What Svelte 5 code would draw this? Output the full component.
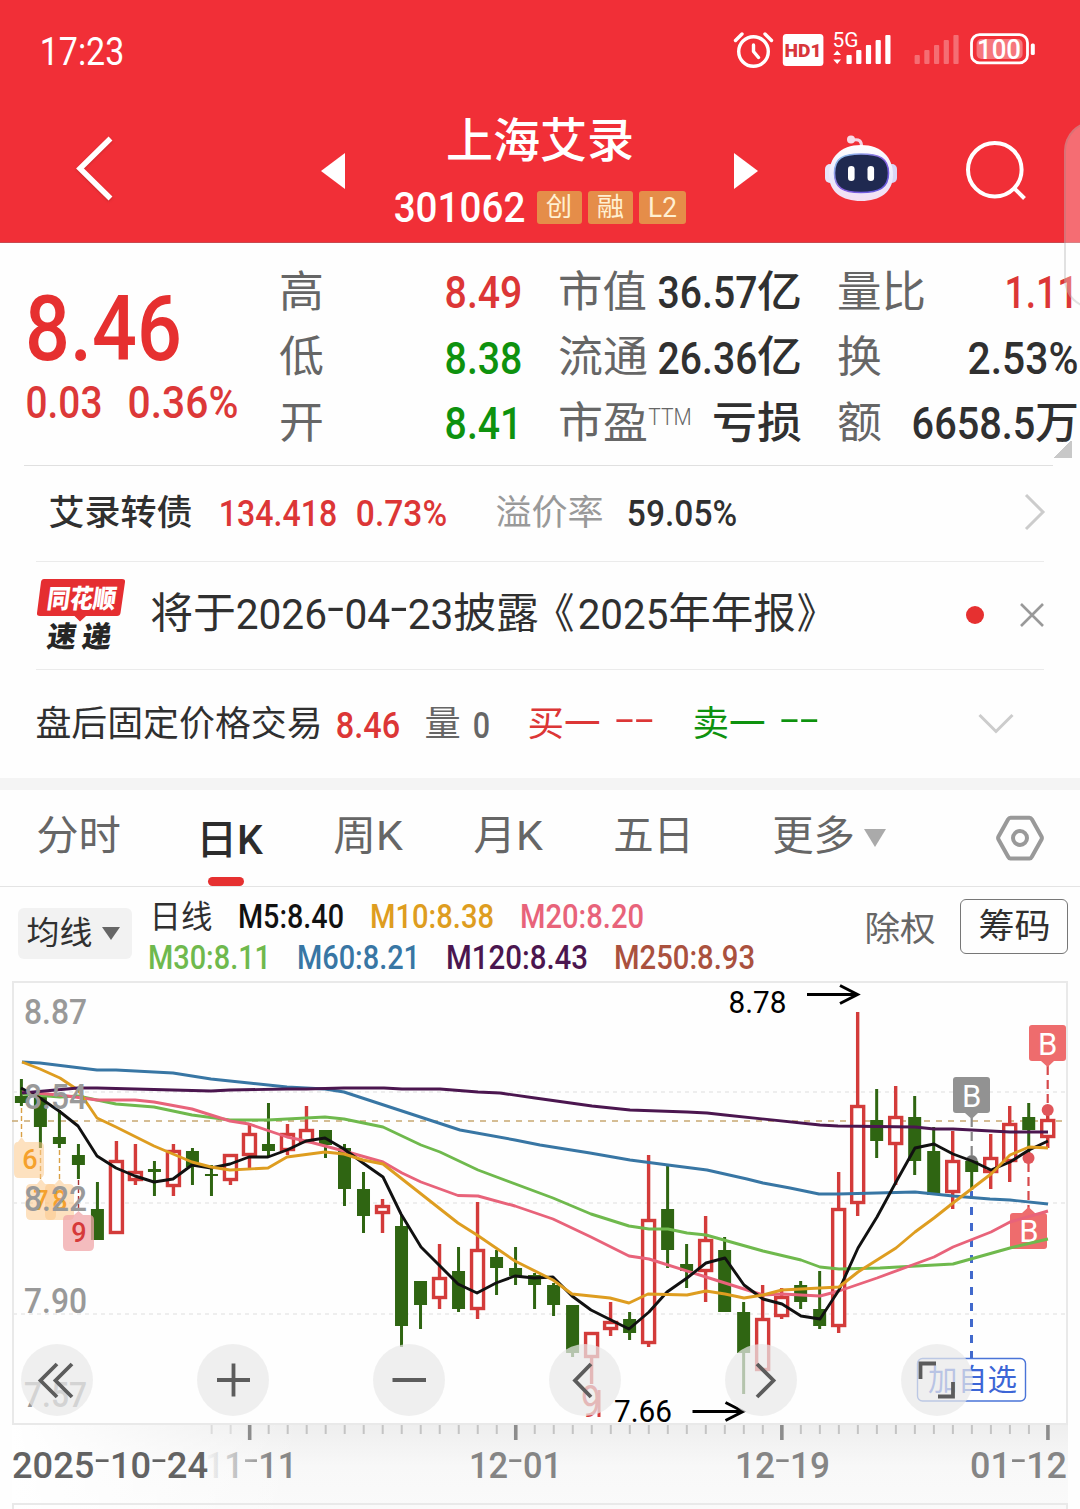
<script>
  const quoteCols = [
    [
      { label: '高', lw: 41, value: '8.49', vw: 75, tone: 'up' },
      { label: '低', lw: 41, value: '8.38', vw: 75, tone: 'down' },
      { label: '开', lw: 41, value: '8.41', vw: 75, tone: 'down' }
    ],
    [
      { label: '市值', lw: 85, value: '36.57', vw: 97, unit: '亿', uw: 41 },
      { label: '流通', lw: 86, value: '26.36', vw: 97, unit: '亿', uw: 41 },
      { label: '市盈', lw: 86, sup: 'TTM', unit: '亏损', uw: 86 }
    ],
    [
      { label: '量比', lw: 85, value: '1.11', vw: 71, tone: 'up' },
      { label: '换', lw: 41, value: '2.53%', vw: 108 },
      { label: '额', lw: 41, value: '6658.5', vw: 121, unit: '万', uw: 40 }
    ]
  ];

  const tabs = [
    { text: '分时', w: 81, x: 38 },
    { text: '日K', w: 63, x: 198, active: true },
    { text: '周K', w: 66, x: 335 },
    { text: '月K', w: 66, x: 475 },
    { text: '五日', w: 77, x: 615 },
    { text: '更多', w: 79, x: 774 }
  ].map((t, i, all) => ({ ...t, lead: i ? t.x - all[i - 1].x - all[i - 1].w : t.x }));

  // direction, high, body top, body bottom, low
  const candles = [
    ['g', 1079, 1096, 1103, 1106], ['g', 1096, 1097, 1127, 1148], ['g', 1110, 1137, 1144, 1148],
    ['g', 1144, 1155, 1165, 1179], ['g', 1182, 1209, 1240, 1240], ['r', 1141, 1160, 1234, 1234],
    ['r', 1144, 1171, 1181, 1185], ['g', 1161, 1169, 1172, 1196], ['r', 1144, 1150, 1187, 1196],
    ['g', 1148, 1151, 1167, 1185], ['g', 1165, 1174, 1176, 1196], ['r', 1154, 1154, 1181, 1185],
    ['r', 1123, 1133, 1156, 1168], ['g', 1103, 1144, 1151, 1157], ['r', 1124, 1133, 1151, 1155],
    ['r', 1106, 1129, 1143, 1143], ['g', 1130, 1130, 1145, 1158], ['g', 1144, 1148, 1189, 1206],
    ['g', 1172, 1189, 1216, 1233], ['r', 1199, 1205, 1214, 1233], ['g', 1215, 1226, 1326, 1347],
    ['g', 1281, 1281, 1305, 1329], ['r', 1244, 1277, 1299, 1309], ['g', 1247, 1271, 1309, 1312],
    ['r', 1202, 1249, 1310, 1319], ['g', 1250, 1257, 1268, 1295], ['g', 1247, 1268, 1276, 1285],
    ['g', 1273, 1275, 1285, 1309], ['g', 1283, 1285, 1305, 1316], ['g', 1305, 1305, 1353, 1357],
    ['r', 1332, 1332, 1358, 1384], ['r', 1302, 1321, 1330, 1336], ['g', 1312, 1319, 1333, 1340],
    ['r', 1155, 1219, 1344, 1347], ['g', 1165, 1209, 1250, 1268], ['g', 1244, 1264, 1271, 1288],
    ['r', 1216, 1239, 1272, 1302], ['g', 1237, 1250, 1312, 1312], ['g', 1302, 1312, 1353, 1394],
    ['r', 1285, 1318, 1371, 1371], ['r', 1288, 1296, 1317, 1319], ['g', 1281, 1285, 1302, 1309],
    ['g', 1271, 1309, 1326, 1329], ['r', 1172, 1208, 1327, 1333], ['r', 1012, 1105, 1204, 1216],
    ['g', 1089, 1120, 1141, 1158], ['r', 1086, 1116, 1145, 1185], ['g', 1096, 1117, 1161, 1175],
    ['g', 1127, 1151, 1195, 1195], ['r', 1131, 1160, 1193, 1209], ['g', 1161, 1161, 1172, 1190],
    ['r', 1134, 1157, 1173, 1189], ['r', 1106, 1123, 1162, 1182], ['g', 1103, 1117, 1130, 1157],
    ['r', 1110, 1119, 1138, 1148]
  ].map(([dir, high, top, bottom, low], i) => ({ dir, high, top, bottom, low, x: 21.4 + i * 19.006 }));

  const averages = [
    { color: '#6fb94d', pts: '22,1094 60,1097 78,1096 116,1104 154,1107 192,1115 230,1120 268,1120 325,1117 344,1119 383,1127 421,1145 440,1152 478,1170 553,1198 591,1214 629,1226 649,1229 668,1229 687,1233 706,1235 763,1251 801,1260 820,1267 839,1269 880,1268 953,1264 1010,1248 1048,1239' },
    { color: '#e8637a', pts: '22,1092 60,1095 97,1100 135,1100 154,1102 192,1109 230,1121 249,1124 287,1137 306,1141 344,1151 383,1162 402,1173 421,1182 458,1195.5 478,1196 515,1206 553,1219 591,1237 629,1256 649,1259 706,1277 763,1295 782,1294 820,1296 839,1291 877,1278 915,1264 934,1257 953,1247 991,1232 1010,1222 1048,1211' },
    { color: '#3876a4', pts: '22,1062 40,1063 97,1070 116,1070 173,1073 211,1079 249,1083 287,1087 325,1089 344,1092 402,1111 460,1130 515,1140 540,1145 590,1153 630,1160 668,1165 707,1170 747,1179 763,1183 790,1188 819,1194 838,1194 915,1192 953,1196 990,1199 1010,1200 1048,1204' },
    { color: '#111', pts: '21,1088 40,1098 59,1111 78,1126 97,1156 116,1168 135,1176 154,1182 173,1179 192,1165 211,1168 230,1164 249,1157 268,1157 287,1150 306,1141 325,1138 344,1149 363,1163 383,1177 401,1214 421,1247 458,1284 477,1293 496,1283 515,1276 534,1278 553,1277 572,1296 591,1310 629,1329 649,1312 667,1292 687,1278 706,1263 725,1258 744,1285 763,1299 782,1304 801,1316 820,1319 839,1290 858,1248 877,1217 896,1182 915,1148 934,1144 953,1154 972,1161 991,1170 1010,1162 1029,1150 1048,1141' },
    { color: '#de9d20', pts: '22,1062 40,1069 60,1078 78,1090 97,1118 116,1127 154,1146 173,1154 192,1162 211,1167 230,1170 268,1168 287,1157 325,1152 344,1154 363,1160 383,1164 458,1223 477,1235 515,1261 553,1280 572,1294 591,1296 610,1298 629,1303 648,1294 687,1295 706,1291 725,1294 744,1298 763,1295 782,1290 801,1289 839,1287 858,1272 877,1260 896,1248 915,1232 934,1218 953,1203 991,1174 1010,1155 1029,1147 1048,1148' },
    { color: '#4b164f', pts: '22,1093 78,1088 97,1088 135,1089 211,1091 230,1090 287,1089 306,1089 344,1088 384,1088 402,1089 440,1089 478,1092 500,1093 535,1098 592,1106 630,1110 687,1112 707,1113 725,1115 820,1125 838,1126 915,1127 934,1129 953,1129 1010,1132 1048,1132' }
  ];

  const axis = [
    { t: '8.87', y: 1024 }, { t: '8.54', y: 1109 }, { t: '8.22', y: 1211 },
    { t: '7.90', y: 1313 }, { t: '7.57', y: 1407 }
  ];

  const ticks = Array.from({ length: 45 }, (_, i) => i + 10).map((i) => ({
    x: 21.6 + i * 19.006,
    major: (i - 12) % 14 === 0,
    faded: i < 12
  }));

  const dates = [
    { t: '2025-10-24', x: 12, w: 196, fill: '#636363' },
    { t: '11-11', x: 205, w: 92, fill: 'url(#ghost)' },
    { t: '12-01', x: 469, w: 93, fill: '#858585' },
    { t: '12-19', x: 735, w: 95, fill: '#858585' },
    { t: '01-12', x: 970, w: 97, fill: '#858585' }
  ];

  const tools = [
    'M36 20 19.500 36.500 36 53M51 20 34.500 36.500 51 53',
    'M20 36H53M36.500 19.500V52.500',
    'M19.500 36H53',
    'M42 20 26 36.500 42 53',
    'M32 20 48.500 36.500 32 53',
    'M19.500 35V19.500H35M52 38V52.500H37'
  ];

  const bars = [55, 50, 45, 40, 35];
  const isHan = (text) => /[\u4e00-\u9fff]/.test(text);
  const base = (text, size) => size * (isHan(text) ? 0.832 : 0.855);
  const pad = (text, size) => size * (isHan(text) ? 0.045 : 0.032);
  const pieces = (text) => text.split(/(-)/).filter(Boolean);
</script>

{#snippet fit(text, w, size, cls = '')}
  <svg class="t {cls}" width={w} height={size}>
    <text x={-pad(text, size)} y={base(text, size)} font-size={size} textLength={w + pad(text, size) * 2} lengthAdjust="spacingAndGlyphs">{#each pieces(text) as p}<tspan class:dash={p === '-'}>{p}</tspan>{/each}</text>
  </svg>
{/snippet}

<main>
  <header>
    <div class="status">
      {@render fit('17:23', 82, 39)}
      <svg class="status-icons" width="310" height="50" viewBox="730 25 310 50">
        <g fill="none" stroke="#fff" stroke-width="3.400" stroke-linecap="round">
          <circle cx="753.500" cy="51.500" r="14.800" />
          <path d="M735.500 40.500 742 34M765 34 771.500 40.500M753.500 45V51.500L758.500 57.500" stroke-linejoin="round" />
        </g>
        <rect x="782.800" y="34" width="40.600" height="32" rx="3.500" fill="#fff" />
        <text x="784.500" y="56.700" font-size="19" font-weight="900" fill="#d8363b" textLength="37" lengthAdjust="spacingAndGlyphs">HD1</text>
        <text x="832.500" y="46.500" font-size="19.500" fill="#fff" textLength="26" lengthAdjust="spacingAndGlyphs">5G</text>
        <path d="M833.300 55 837.200 50.500 841 55zM833.300 59.500 837.200 64 841 59.500z" fill="#fff" />
        {#each bars as y, i}
          <rect x={846.5 + i * 9.7} {y} width="5.200" height={64 - y} rx="1" fill="#fff" />
          <rect x={914.6 + i * 9.7} {y} width="5.200" height={64 - y} rx="1" fill="#fff" opacity="0.300" />
        {/each}
        <rect x="971.500" y="34.700" width="56" height="28.200" rx="8" fill="none" stroke="#fff" stroke-width="2.800" />
        <rect x="976.600" y="39" width="46" height="20" rx="5" fill="#fff" opacity="0.350" />
        <rect x="1030.800" y="43.500" width="4" height="11.500" rx="1.500" fill="#fff" />
        <text x="977" y="58.500" font-size="27" font-weight="500" fill="#fff" textLength="44" lengthAdjust="spacingAndGlyphs">100</text>
      </svg>
    </div>
    <div class="nav">
      <svg class="back" width="40" height="70" viewBox="75 134 40 70">
        <path d="M110.500 138.500 80 168.500 110.500 198.500" fill="none" stroke="#fff" stroke-width="5.500" />
      </svg>
      <svg class="prev" width="24" height="36"><path d="M24 0V36L0 18z" fill="#fff" /></svg>
      <div class="title">
        {@render fit('上海艾录', 184, 46.5, 'medium')}
        <div class="code">
          {@render fit('301062', 129, 42, 'medium')}
          <div class="tags">
            <span class="tag">{@render fit('创', 24, 26)}</span>
            <span class="tag">{@render fit('融', 25, 26)}</span>
            <span class="tag wide">{@render fit('L2', 27, 28)}</span>
          </div>
        </div>
      </div>
      <svg class="next" width="24" height="36"><path d="M0 0V36L24 18z" fill="#fff" /></svg>
      <svg class="robot" width="76" height="70" viewBox="823 133 76 70">
        <defs>
          <linearGradient id="shell" x1="0" y1="0" x2="0" y2="1">
            <stop offset="0" stop-color="#fff" /><stop offset="0.600" stop-color="#eae8fb" /><stop offset="1" stop-color="#f4dff2" />
          </linearGradient>
          <linearGradient id="rim" x1="0" y1="0" x2="1" y2="1">
            <stop offset="0" stop-color="#8fd4ef" /><stop offset="0.500" stop-color="#8b62e0" /><stop offset="1" stop-color="#5b57dd" />
          </linearGradient>
        </defs>
        <path d="M853 140Q862 138 861.500 147" fill="none" stroke="#f6d5e4" stroke-width="3" />
        <circle cx="851" cy="139.500" r="4" fill="#f8dbe7" />
        <rect x="825" y="164" width="10" height="19" rx="5" fill="#e8e4fa" />
        <rect x="887" y="164" width="10" height="19" rx="5" fill="#d9d5f5" />
        <path d="M861 145C882 145 893 158 893 175C893 192 880 201 861 201C842 201 829 192 829 175C829 158 840 145 861 145z" fill="url(#shell)" />
        <path d="M861 154C879 154 888.500 158 888.500 173C888.500 188 879 192.500 861 192.500C843 192.500 834.500 188 834.500 173C834.500 158 843 154 861 154z" fill="#1f2950" stroke="url(#rim)" stroke-width="1.600" />
        <rect x="848" y="166" width="6.600" height="15" rx="3.300" fill="#fff" />
        <rect x="867.500" y="166" width="6.600" height="15" rx="3.300" fill="#fff" />
      </svg>
      <svg class="search" width="64" height="64" viewBox="964 139 64 64">
        <g fill="none" stroke="#fff" stroke-width="4"><circle cx="994.800" cy="169.700" r="26.800" /><path d="M1013.500 187.500 1024.500 198.500" /></g>
      </svg>
    </div>
  </header>

  <section class="quote">
    <div class="price up">
      {@render fit('8.46', 151, 90, 'medium')}
      <div class="change">
        {@render fit('0.03', 74, 44, 'medium')}
        {@render fit('0.36%', 108, 44, 'medium')}
      </div>
    </div>
    {#each quoteCols as col}
      <div class="col">
        {#each col as item}
          <div class="cell">
            <span class="label">
              {@render fit(item.label, item.lw, 43.5)}
              {#if item.sup}{@render fit(item.sup, 42, 23, 'sup')}{/if}
            </span>
            <span class="value {item.tone ?? ''}">
              {#if item.value}{@render fit(item.value, item.vw, 44, 'medium')}{/if}
              {#if item.unit}{@render fit(item.unit, item.uw, 43.5, 'medium')}{/if}
            </span>
          </div>
        {/each}
      </div>
    {/each}
    <i class="corner"></i>
  </section>

  <section class="bond">
    {@render fit('艾录转债', 141, 35.5, 'medium')}
    {@render fit('134.418', 116, 36, 'medium up g1')}
    {@render fit('0.73%', 89, 36, 'medium up g2')}
    {@render fit('溢价率', 105, 35.5, 'muted g3')}
    {@render fit('59.05%', 108, 36, 'medium g4')}
    <svg class="end" width="24" height="38"><path d="M4 2 21 19 4 36" fill="none" stroke="#ccc" stroke-width="3" /></svg>
  </section>

  <section class="news">
    <svg class="logo" width="90" height="74" viewBox="36 578 90 74">
      <path d="M44 579H122Q125.500 579 125 582L120.500 613Q120 616 117 616H86L80 621.500 74.500 616H40Q36.500 616 37 613L41 582Q41.500 579 44 579z" fill="#e52e31" />
      <g font-weight="900">
        <text transform="translate(46 608) skewX(-8)" font-size="26" fill="#fff" textLength="69" lengthAdjust="spacingAndGlyphs">同花顺</text>
        <text transform="translate(46 646.500) skewX(-8)" font-size="29" fill="#262626" textLength="64" lengthAdjust="spacing">速递</text>
      </g>
    </svg>
    <div class="headline">
      {@render fit('将于', 82, 41.5)}
      {@render fit('2026-04-23', 215, 42.5)}
      {@render fit('披露', 82, 41.5)}
      {@render fit('《', 37, 41.5, 'open')}
      {@render fit('2025', 88, 42.5, 'year')}
      {@render fit('年年报', 124, 41.5)}
      {@render fit('》', 36, 41.5, 'shut')}
    </div>
    <i class="dot"></i>
    <svg class="close" width="26" height="26"><path d="M2 2 24 24M24 2 2 24" stroke="#999" stroke-width="2.600" /></svg>
  </section>

  <section class="after">
    {@render fit('盘后固定价格交易', 284, 35.7)}
    {@render fit('8.46', 62, 36.5, 'medium up a1')}
    {@render fit('量', 33, 35.7, 'soft a2')}
    {@render fit('0', 15, 36.5, 'medium soft a3')}
    {@render fit('买一', 70, 35.7, 'up a4')}
    {@render fit('--', 37, 36, 'up a5')}
    {@render fit('卖一', 70, 35.7, 'down a6')}
    {@render fit('--', 37, 36, 'down a5')}
    <svg class="more" width="36" height="22"><path d="M1.500 2 18 18.500 34.500 2" fill="none" stroke="#ccc" stroke-width="3" /></svg>
  </section>

  <nav class="tabs">
    {#each tabs as tab}
      <div class="tab" class:active={tab.active} style:margin-left="{tab.lead}px">
        {@render fit(tab.text, tab.w, 41)}
      </div>
    {/each}
    <svg class="caret" width="22" height="18"><path d="M0 0H22L11 18z" fill="#aaa" /></svg>
    <svg class="gear" width="50" height="48" viewBox="995 814 50 48">
      <g fill="none" stroke="#999" stroke-width="4"><path d="M1010.500 817.800H1029.500Q1031 817.800 1032 819.500L1041.500 836.500Q1042.300 838 1041.500 839.500L1032 856.500Q1031 858.500 1029.500 858.500H1010.500Q1009 858.500 1008 856.500L998.500 839.500Q997.700 838 998.500 836.500L1008 819.500Q1009 817.800 1010.500 817.800z" /><circle cx="1020" cy="838" r="7" /></g>
    </svg>
  </nav>

  <section class="legend">
    <div class="picker">
      {@render fit('均线', 63, 31.5)}
      <svg width="18" height="13"><path d="M0 0H18L9 13z" fill="#666" /></svg>
    </div>
    <div class="lines">
      <div class="line">
        {@render fit('日线', 60, 32)}
        {@render fit('M5:8.40', 104, 33, 'medium m5')}
        {@render fit('M10:8.38', 122, 33, 'medium m10')}
        {@render fit('M20:8.20', 122, 33, 'medium m20')}
      </div>
      <div class="line second">
        {@render fit('M30:8.11', 121, 33, 'medium m30')}
        {@render fit('M60:8.21', 121, 33, 'medium m60')}
        {@render fit('M120:8.43', 140, 33, 'medium m120')}
        {@render fit('M250:8.93', 139, 33, 'medium m250')}
      </div>
    </div>
    {@render fit('除权', 68, 34.5, 'soft exr')}
    <div class="chips">{@render fit('筹码', 69, 34.5)}</div>
  </section>

  <section class="chart">
    <svg class="plot" width="1080" height="537" viewBox="0 972 1080 537">
      <defs>
        <linearGradient id="down" x1="0" y1="0" x2="0" y2="1">
          <stop offset="0" stop-color="#eee" /><stop offset="0.500" stop-color="#f8f8f8" /><stop offset="1" stop-color="#fafafa" />
        </linearGradient>
        <linearGradient id="fade"><stop offset="0" stop-color="#fff" /><stop offset="1" stop-color="#fff" stop-opacity="0" /></linearGradient>
        <linearGradient id="ghost"><stop offset="0" stop-color="#888" stop-opacity="0" /><stop offset="0.700" stop-color="#888" /></linearGradient>
      </defs>
      <rect x="13" y="1424" width="1055" height="85" fill="url(#down)" />
      <rect x="12" y="1424" width="290" height="85" fill="url(#fade)" />
      <g fill="none" stroke="#e9e9e9" stroke-width="2">
        <rect x="13" y="982" width="1054" height="442" />
        <path d="M13 1509V1504H1067V1509" />
        <path d="M13 1092H1067M13 1203H1067M13 1314H1067" stroke-width="1.600" stroke-dasharray="4 4" />
      </g>
      <path d="M12 1121H1067" stroke="#c8a871" stroke-width="1.700" stroke-dasharray="6 6" />

      <g stroke="#d9a045" stroke-width="1.400" stroke-dasharray="5 3">
        <path d="M21.500 1108V1137M40.500 1150V1180M59.500 1150V1180" /><path d="M78.500 1180V1212" stroke="#a33" />
      </g>
      {#each candles as c}
        {#if c.dir === 'g'}
          <rect x={c.x - 1.5} y={c.high} width="3" height={c.low - c.high} fill="#2f6512" />
          <rect x={c.x - 6.5} y={c.top} width="13" height={c.bottom - c.top} fill="#2f6512" />
        {:else}
          <path d="M{c.x} {c.high}V{c.top + 1}M{c.x} {c.bottom - 1}V{c.low}" stroke="#d33b3a" stroke-width="3.400" />
          <rect x={c.x - 6} y={c.top + 1.5} width="12" height={c.bottom - c.top - 3} fill="#fff" stroke="#d33b3a" stroke-width="3.400" />
        {/if}
      {/each}

      <g fill="#fbc98a" fill-opacity="0.550">
        <path d="M18 1142 21.500 1137 25 1142H39Q44 1142 44 1147V1173Q44 1178 39 1178H19Q14 1178 14 1173V1147Q14 1142 18 1142z" />
        <path d="M37 1184 41 1179 45 1184H51Q56 1184 56 1189V1215Q56 1220 51 1220H31Q26 1220 26 1215V1189Q26 1184 31 1184z" />
        <path d="M55 1184 59.500 1179 64 1184H69Q74 1184 74 1189V1215Q74 1220 69 1220H50Q45 1220 45 1215V1189Q45 1184 50 1184z" />
      </g>
      <path d="M74 1215 78.500 1211 83 1215H89Q94 1215 94 1220V1246Q94 1251 89 1251H68Q63 1251 63 1246V1220Q63 1215 68 1215z" fill="#f0a5a8" fill-opacity="0.750" />
      <g font-size="27" font-weight="500" fill="#f5a12c" text-anchor="middle">
        <text x="30" y="1169">6</text><text x="41" y="1210">7</text><text x="60" y="1210">8</text>
        <text x="79" y="1242" fill="#d63a3a">9</text>
        <text x="591" y="1417" font-size="44" font-weight="400" fill="#d63a3a" textLength="20" lengthAdjust="spacingAndGlyphs">9</text>
      </g>
      <path d="M599 1390V1417" stroke="#d63a3a" stroke-width="3" />

      <g stroke-width="2.200" stroke-dasharray="9 5">
        <path d="M1047.700 1066V1106M1028.500 1163V1210" stroke="#d6484a" /><path d="M971.700 1118V1158" stroke="#888" />
      </g>
      <g fill="#e0555a"><circle cx="1047.700" cy="1110" r="6" /><circle cx="1028.500" cy="1158" r="6" /></g>
      <path d="M965.700 1161A6 6 0 0 1 977.700 1161z" fill="#777" />
      <path d="M1032 1025H1063Q1066 1025 1066 1028V1058Q1066 1061 1063 1061H1054L1047.700 1067 1041 1061H1032Q1029 1061 1029 1058V1028Q1029 1025 1032 1025z" fill="#ee6c6d" />
      <path d="M956 1077H987Q990 1077 990 1080V1110Q990 1113 987 1113H978L971.700 1119 965 1113H956Q953 1113 953 1110V1080Q953 1077 956 1077z" fill="#929292" />
      <path d="M1013 1213H1022L1028.500 1207 1035 1213H1044Q1047 1213 1047 1216V1246Q1047 1249 1044 1249H1013Q1010 1249 1010 1246V1216Q1010 1213 1013 1213z" fill="#ee6c6d" />
      <g font-size="31" fill="#fff" text-anchor="middle">
        <text x="1047.700" y="1054.500">B</text><text x="971.700" y="1106.500">B</text><text x="1029" y="1242">B</text>
      </g>
      <path d="M971.500 1191V1358" stroke="#4169cc" stroke-width="3" stroke-dasharray="8 8" />

      {#each averages as a}
        <polyline points={a.pts} fill="none" stroke={a.color} stroke-width="2.900" stroke-linejoin="round" />
      {/each}

      <g fill="none" stroke="#000" stroke-width="3">
        <path d="M807 994.500H857M840 985.500 857.500 994.500 840 1003.500M692.500 1411.500H743M725.500 1402.500 743 1411.500 725.500 1420.500" />
      </g>
      <g font-size="30.500" fill="#000">
        <text x="728.500" y="1012.500" textLength="58" lengthAdjust="spacingAndGlyphs">8.78</text>
        <text x="614" y="1421.500" textLength="58" lengthAdjust="spacingAndGlyphs">7.66</text>
      </g>
      <g font-size="35.500" font-weight="500" fill="#999">
        {#each axis as a}
          <text x="24" y={a.y} textLength="63" lengthAdjust="spacingAndGlyphs">{a.t}</text>
        {/each}
      </g>
      <rect x="917.500" y="1358.500" width="108" height="42.500" rx="5" fill="#fff" stroke="#4a74d8" stroke-width="1.400" />
      <text x="928" y="1389.500" font-size="29.500" fill="#3d66d6" textLength="89">加自选</text>

      {#each ticks as t}
        <path d="M{t.x} 1425V{t.major ? 1440 : 1434}" stroke={t.major ? '#8c8c8c' : '#c4c4c4'} stroke-width={t.major ? 3.6 : 2} opacity={t.faded ? 0.5 : 1} />
      {/each}
      <g font-size="36" font-weight="500">
        {#each dates as d}
          <text x={d.x} y="1478" fill={d.fill} textLength={d.w} lengthAdjust="spacingAndGlyphs">{#each pieces(d.t) as p}<tspan class:dash={p === '-'}>{p}</tspan>{/each}</text>
        {/each}
      </g>
    </svg>
    <div class="tools">
      {#each tools as d}
        <div class="tool"><svg width="72" height="72"><path {d} fill="none" stroke="#5c5c5c" stroke-width="3.800" /></svg></div>
      {/each}
    </div>
  </section>

  <i class="drawer"></i>
</main>

<style>
  :global(body) { background: #fff; }
  main {
    position: relative;
    width: 1080px;
    height: 1509px;
    overflow: hidden;
    background: #fefefe;
    color: #303030;
    font-family: Roboto, 'Noto Sans CJK SC', sans-serif;
  }
  main * { box-sizing: border-box; }
  svg { display: block; flex: none; }
  .t { overflow: visible; fill: currentColor; }
  .dash { font-size: 1.500em; font-weight: 300; }
  .medium { font-weight: 500; }
  .up { color: #dc3636; }
  .down { color: #0e920e; }
  .muted { color: #999; }
  .soft { color: #666; }

  header { height: 243px; background: #f12f37; color: #fff; border-bottom: 1px solid #c94950; }
  .status { height: 100px; display: flex; justify-content: space-between; padding: 25px 40px 0 41px; }
  .status > .t { margin-top: 7px; }
  .nav { height: 142px; display: flex; align-items: center; padding-left: 75px; }
  .back { margin-bottom: 4px; filter: drop-shadow(0 1px 1px #a0202080); }
  .prev { margin-left: 206px; }
  .title { margin-left: 49.500px; width: 291px; height: 142px; padding-top: 18px; display: flex; flex-direction: column; align-items: center; gap: 21.500px; }
  .code { display: flex; align-items: center; gap: 13px; }
  .tags { display: flex; gap: 6px; }
  .tag { width: 45px; height: 33px; border-radius: 3px; background: #e58d49; color: #fff0d2; display: flex; align-items: center; justify-content: center; }
  .wide { width: 47px; }
  .next { margin-left: 48.500px; }
  .robot { margin-left: 65px; margin-bottom: 6px; }
  .search { margin-left: 65px; }

  .quote { position: relative; height: 223px; display: grid; grid-template-columns: 281px 279px 279px 241px; }
  .quote::after { content: ''; position: absolute; left: 24px; right: 27px; bottom: 0; height: 1.500px; background: #e0e0e0; }
  .price { padding: 39.500px 0 0 27.500px; color: #e63030; }
  .change { display: flex; gap: 28px; margin-top: 7px; color: #dc3838; margin-left: -1px; }
  .col { padding: 16.500px 39px 0 0; }
  .col:nth-child(4) { padding-right: 3px; }
  .cell { height: 65.500px; display: flex; align-items: center; justify-content: space-between; }
  .label, .value { display: flex; align-items: center; gap: 3px; }
  .label { color: #666; }
  .sup { margin-bottom: 14px; font-weight: 300; }
  .corner { position: absolute; right: 8px; bottom: 8.500px; width: 18px; height: 18px; background: linear-gradient(135deg, transparent 50%, #c8c8c8 50%); }

  .bond { height: 96px; margin: 0 36px; padding-left: 14px; display: flex; align-items: center; border-bottom: 1.500px solid #ebebeb; }
  .bond > .t { position: relative; top: -1px; }
  .g1 { margin-left: 29px; }
  .g2 { margin-left: 21px; }
  .g3 { margin-left: 51px; }
  .g4 { margin-left: 26px; }
  .bond .end { margin-left: auto; margin-right: -2px; margin-bottom: 4px; }

  .news { height: 107.500px; margin: 0 36px; display: flex; align-items: center; border-bottom: 1.500px solid #ebebeb; }
  .headline { display: flex; align-items: center; gap: 3px; margin-left: 26px; margin-bottom: 3px; }
  .open { margin-left: -4px; }
  .year { margin-left: 3px; }
  .shut { margin-left: 1px; }
  .dot { width: 18px; height: 18px; border-radius: 50%; background: #e63030; margin-left: auto; margin-right: 35px; }
  .close { margin-right: -1px; }

  .after { height: 120.500px; padding: 0 66px 0 37px; display: flex; align-items: center; border-bottom: 12px solid #f4f4f4; }
  .a1 { margin-left: 16px; margin-top: 3px; }
  .a2 { margin-left: 27px; }
  .a3 { margin-left: 15px; margin-top: 3px; }
  .a4 { margin-left: 40px; }
  .a5 { margin-left: 17px; margin-top: 3px; }
  .a6 { margin-left: 41px; }
  .more { margin-left: auto; }

  .tabs { height: 97px; display: flex; align-items: center; border-bottom: 1.500px solid #e4e4e4; }
  .tab { position: relative; height: 96px; display: flex; align-items: center; padding-bottom: 3px; color: #666; }
  .active { color: #2c2c2c; font-weight: 500; padding: 5px 0 0; }
  .active::after { content: ''; position: absolute; left: 10px; bottom: 0; width: 36px; height: 9px; border-radius: 4.500px; background: #e63030; }
  .caret { margin-left: 11px; }
  .gear { margin-left: 109px; }

  .legend { height: 85px; display: flex; align-items: flex-start; padding-left: 18px; }
  .picker { width: 114px; height: 51px; margin-top: 21px; padding-left: 10px; border-radius: 6px; background: #f2f2f2; display: flex; align-items: center; gap: 11px; }
  .lines { width: 608px; margin-left: 17px; padding-top: 13px; }
  .line { display: flex; align-items: center; height: 33px; padding-left: 2px; gap: 28px; }
  .second { margin-top: 8px; padding-left: 0; }
  .m5 { color: #111; }
  .m10 { color: #de9d20; }
  .m20 { color: #e8637a; }
  .m30 { color: #6fb94d; }
  .m60 { color: #3876a4; }
  .m120 { color: #4b164f; }
  .m250 { color: #aa513e; }
  .exr { margin: 25px 0 0 109px; }
  .chips { margin: 12px 0 0 26px; width: 108px; height: 55px; border: 1.500px solid #777; border-radius: 6px; display: flex; align-items: center; justify-content: center; }

  .chart { position: relative; }
  .tools { position: absolute; top: 372px; left: 21px; display: flex; gap: 104px; }
  .tool { width: 72px; height: 72px; border-radius: 50%; background: #e9e9e9b8; }
  .drawer { position: absolute; top: 121px; left: 1064px; width: 80px; height: 188px; border-radius: 30px; border: 2px solid #8080803a; background: #ffffff4d; }
</style>
